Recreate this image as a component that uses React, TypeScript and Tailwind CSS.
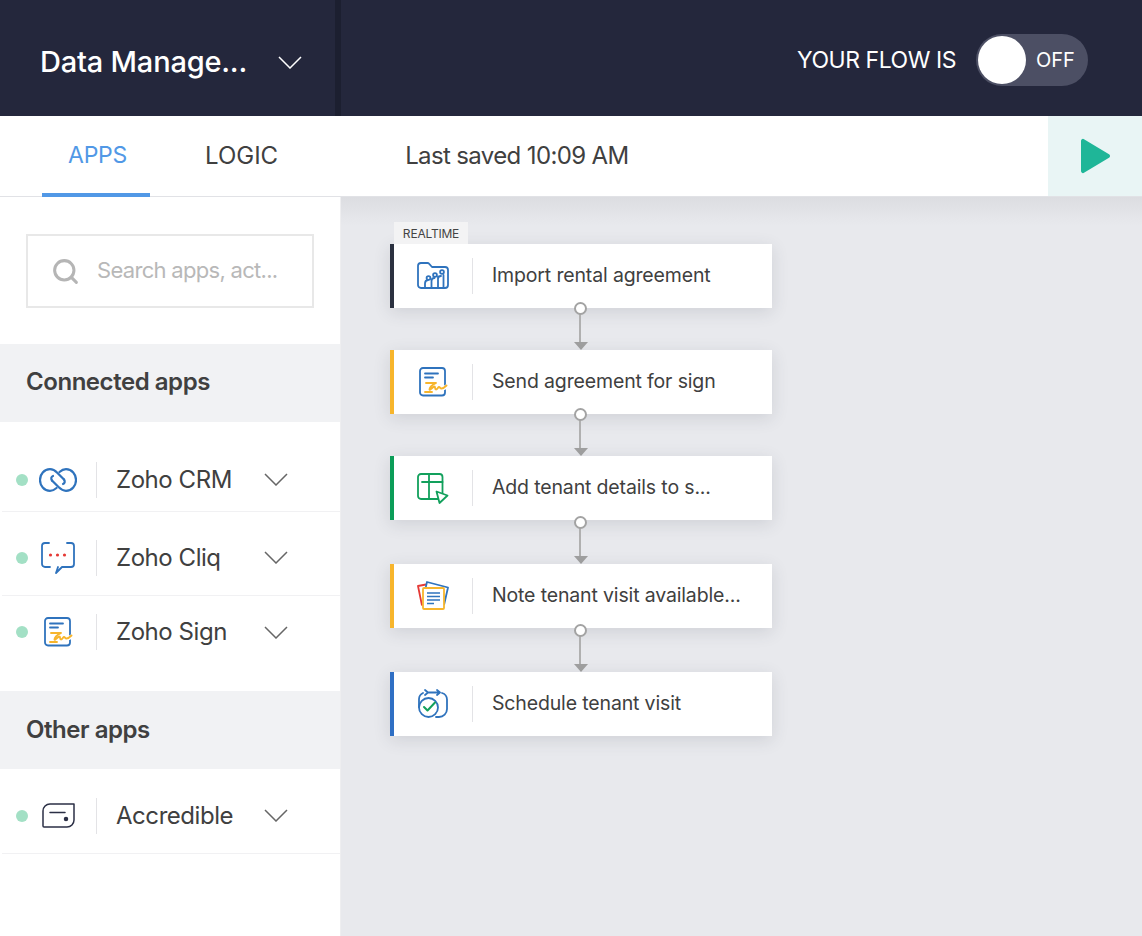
import { Search } from "lucide-react";
import type { ReactNode } from "react";

const BLUE = "#2f73bd";
const YELLOW = "#f7b52c";
const GREEN = "#12a05c";

const Chevron = ({ color }: { color: string }) => (
  <svg width="24" height="13" viewBox="0 0 24 13" fill="none" stroke={color} strokeWidth="1.500">
    <path d="M1 1l11 11L23 1" />
  </svg>
);

const FolderIcon = () => (
  <svg width="32" height="28" viewBox="0 0 32 28" fill="none" stroke={BLUE} strokeWidth="1.800" strokeLinecap="round" strokeLinejoin="round">
    <path d="M8 26H4a3 3 0 0 1-3-3V4a3 3 0 0 1 3-3h6.500a2 2 0 0 1 1.500.7L15 5h13a3 3 0 0 1 3 3v15a3 3 0 0 1-3 3H8z" />
    <path d="M8 26v-4.500a3.500 3.500 0 0 1 3-3.500M14.500 26v-8.500M14.500 19a3 3 0 0 1 3-3M21 26V14.500M21 17a3 3 0 0 1 3-3M26.500 26V13" />
    <circle cx="11.500" cy="16" r="1.900" />
    <circle cx="18" cy="13" r="1.900" />
    <circle cx="25" cy="10" r="1.900" />
  </svg>
);

const SignIcon = () => (
  <svg width="29" height="30" viewBox="0 0 29 30" fill="none" strokeLinecap="round" strokeLinejoin="round">
    <rect x="1" y="1" width="25" height="27.500" rx="3" stroke={BLUE} strokeWidth="1.800" />
    <path d="M6 6.500h13M6 10.500h8" stroke={BLUE} strokeWidth="1.800" />
    <path d="M20 22.500c1 0 4-.5 8-3.500" stroke="#fff" strokeWidth="4" />
    <path d="M7 16h10c-3 1.500-6.500 3.500-6.500 6.500 0 1.500 3.500-3 5-3 1 0 0 3 1.500 3s2-2.500 3-2.500 1 1.500 2.500 1.500 3-1 5-3" stroke={YELLOW} strokeWidth="1.900" />
    <path d="M6 25h7" stroke={YELLOW} strokeWidth="1.900" />
  </svg>
);

const SheetIcon = () => (
  <svg width="32" height="31" viewBox="0 0 32 31" fill="none" stroke={GREEN} strokeWidth="1.800" strokeLinecap="round" strokeLinejoin="round">
    <rect x="1" y="1" width="24.500" height="25" rx="3" />
    <path d="M5 9h20.500M12 1v25" />
    <path d="M19.500 18.500 30.500 22.500 22.500 30z" fill="#fff" />
  </svg>
);

const NotesIcon = () => (
  <svg width="32" height="30" viewBox="0 0 32 30" fill="none" strokeLinejoin="round">
    <path d="M5 24.500 1 5l8-1.500" stroke="#e53935" strokeWidth="1.800" />
    <path d="M27 24l4-17.500L10 1 8.800 6" stroke={BLUE} strokeWidth="1.800" />
    <rect x="6" y="7" width="21" height="21" rx="1" fill="#fff" stroke={YELLOW} strokeWidth="1.800" />
    <path d="M10 12h13M10 15.500h13M10 19h13M10 22.500h7" stroke={BLUE} strokeWidth="1.500" />
  </svg>
);

const CalendarIcon = () => (
  <svg width="30" height="30" viewBox="0 0 30 30" fill="none" stroke={BLUE} strokeWidth="1.800" strokeLinecap="round" strokeLinejoin="round">
    <circle cx="10.500" cy="18.500" r="9.500" />
    <path d="M1 18v-8a7 7 0 0 1 4-6M7 1l3 2.500L7 6M10 3.500h11M19 1l3 2.500L19 6M24 4a7 7 0 0 1 5 6.500V20a8 8 0 0 1-8 8h-3" />
    <path d="M6 18l3.500 3.500L17 13.500" stroke={GREEN} strokeWidth="2" />
  </svg>
);

const CrmIcon = () => (
  <svg width="38" height="24" viewBox="0 0 38 24" fill="none" stroke={BLUE} strokeWidth="2.200" strokeLinecap="round">
    <path d="M17.500 20C15.500 21.800 13.500 22.800 11 22.800 5 22.800 1 17.500 1 12S5 1.200 11 1.200c3 0 5 1.300 7.500 3.800L25 11.500" />
    <path d="M20.500 4C22.500 2.200 24.500 1.200 27 1.200 33 1.200 37 6.500 37 12S33 22.800 27 22.800c-3 0-5-1.300-7.500-3.800L13 12.500" />
    <path d="M13 12.500c-1.500-2-.5-4 1-4.500M25 11.500c1.500 2 .5 4-1 4.500" />
  </svg>
);

const CliqIcon = () => (
  <svg width="34" height="32" viewBox="0 0 34 32" fill="none" strokeLinecap="round" strokeLinejoin="round">
    <path d="M9 25H4a3 3 0 0 1-3-3V4a3 3 0 0 1 3-3h4M26 1h4a3 3 0 0 1 3 3v18a3 3 0 0 1-3 3H21l-6 6 2-6" stroke={BLUE} strokeWidth="1.800" />
    <circle cx="9.500" cy="13" r="1.600" fill="#e53935" />
    <circle cx="16.500" cy="13" r="1.600" fill="#e53935" />
    <circle cx="23.500" cy="13" r="1.600" fill="#e53935" />
  </svg>
);

const AccredibleIcon = () => (
  <svg width="33" height="25" viewBox="0 0 33 25" fill="none" stroke="#2b2f45" strokeWidth="1.500" strokeLinecap="round" strokeLinejoin="round">
    <path d="M8 1h24v16a7 7 0 0 1-7 7H2a1 1 0 0 1-1-1V8a7 7 0 0 1 7-7z" />
    <path d="M8 9.500h15" />
    <circle cx="24" cy="16" r="1.500" fill="#2b2f45" />
  </svg>
);

const connected = [
  { name: "Zoho CRM", icon: <CrmIcon />, h: "h-[90px] pt-[26px]" },
  { name: "Zoho Cliq", icon: <CliqIcon />, h: "h-[84px] pt-[8px]" },
  { name: "Zoho Sign", icon: <SignIcon />, h: "h-[72px] border-b-0" },
];

const steps = [
  { name: "Import rental agreement", icon: <FolderIcon />, bar: "border-l-[#2b3140]", tag: "REALTIME" },
  { name: "Send agreement for sign", icon: <SignIcon />, bar: "border-l-[#f7b52c]" },
  { name: "Add tenant details to s...", icon: <SheetIcon />, bar: "border-l-[#0b9d58]" },
  { name: "Note tenant visit available...", icon: <NotesIcon />, bar: "border-l-[#f7b52c]", tall: true },
  { name: "Schedule tenant visit", icon: <CalendarIcon />, bar: "border-l-[#2f6fc4]", tall: true },
];

const AppRow = ({ name, icon, h }: { name: string; icon: ReactNode; h: string }) => (
  <div className={`ml-[2px] flex items-center border-b border-[#f1f1f3] pl-[14px] ${h}`}>
    <span className="h-3 w-3 shrink-0 rounded-full bg-[#a3e0c5]" />
    <div className="flex w-[68px] shrink-0 justify-center pr-[8px]">{icon}</div>
    <div className="h-9 w-px shrink-0 bg-[#e3e3e6]" />
    <span className="ml-[19px] w-[148px] text-[24px] tracking-[-0.45px] text-[#404040]">{name}</span>
    <Chevron color="#666666" />
  </div>
);

const Connector = ({ tall }: { tall?: boolean }) => (
  <div className={`relative ml-[189px] w-px ${tall ? "h-[44px]" : "h-[42px]"}`}>
    <div className={`absolute left-[-5px] z-10 h-[13px] w-[13px] rounded-full border-2 border-[#a3a3a3] bg-white ${tall ? "top-[-4px]" : "top-[-6px]"}`} />
    <div className="absolute bottom-[8px] left-0 top-[6px] w-[2px] bg-[#b0b0b0]" />
    <div className="absolute bottom-0 left-[-5px] h-0 w-0 border-x-[7px] border-t-[8px] border-x-transparent border-t-[#a0a0a0]" />
  </div>
);

export default function App() {
  return (
    <div className="flex h-[936px] w-[1142px] flex-col overflow-hidden bg-white font-['Inter','Liberation_Sans',sans-serif] text-[#404040]">
      <header className="flex h-[116px] shrink-0 bg-[#24273c] text-white">
        <div className="flex w-[341px] items-center border-r-[6px] border-[#1c1f30] pl-[40px] pt-[8px]">
          <span className="w-[238px] text-[29px] font-medium tracking-[-0.2px]">Data Manage...</span>
          <Chevron color="#ffffff" />
        </div>
        <div className="flex flex-1 items-center justify-end pr-[54px] pt-[4px]">
          <span className="mr-[20px] text-[23px] tracking-[-0.45px]">YOUR FLOW IS</span>
          <div className="flex h-[52px] w-[112px] items-center rounded-full bg-[#4c4f64] pl-[2px]">
            <div className="h-[48px] w-[48px] rounded-full bg-white" />
            <span className="ml-[10px] text-[20px]">OFF</span>
          </div>
        </div>
      </header>

      <nav className="z-20 flex h-[81px] shrink-0 border-b border-[#e1e2e6] bg-white">
        <div className="flex pl-[42px]">
          <div className="-mb-px flex w-[108px] items-center justify-center border-b-[4px] border-[#5198e6] pl-[3px] pt-[1px] text-[23px] tracking-[-0.3px] text-[#5198e6]">APPS</div>
          <div className="ml-[55px] flex items-center text-[24px]">LOGIC</div>
        </div>
        <div className="ml-[127px] flex flex-1 items-center text-[24px] tracking-[-0.63px]">Last saved 10:09 AM</div>
        <div className="flex w-[94px] items-center justify-center bg-[#e9f5f5]">
          <svg width="32" height="36" viewBox="0 0 32 36"><path d="M3 3v30a1 1 0 0 0 1.500 1l25-15a1.200 1.200 0 0 0 0-2L4.500 2A1 1 0 0 0 3 3z" fill="#1fb698" stroke="#1fb698" strokeWidth="2" strokeLinejoin="round" /></svg>
        </div>
      </nav>

      <div className="flex min-h-0 flex-1">
        <aside className="flex w-[341px] shrink-0 flex-col border-r border-[#eeeef0] bg-white">
          <div className="mx-[26px] mt-[37px] flex h-[74px] w-[288px] items-center border-2 border-[#e8e8e8] pl-[23px]">
            <Search className="h-[29px] w-[29px] text-[#b5b5b5]" strokeWidth={2.500} />
            <span className="ml-[17px] pb-[2px] text-[22px] tracking-[-0.7px] text-[#b8b8b8]">Search apps, act...</span>
          </div>
          <div className="mt-[36px] flex h-[78px] items-center bg-[#f1f2f4] pb-[2px] pl-[26px] text-[24px] font-semibold tracking-[-0.45px]">Connected apps</div>
          {connected.map(row => (
            <AppRow key={row.name} {...row} />
          ))}
          <div className="mt-[23px] flex h-[78px] items-center bg-[#f1f2f4] pl-[26px] text-[24px] font-semibold tracking-[-0.45px]">Other apps</div>
          <AppRow name="Accredible" icon={<AccredibleIcon />} h="h-[85px] pt-[9px]" />
        </aside>

        <main className="flex-1 bg-[#e8e9ed] bg-gradient-to-b from-[#dcdde1] to-[#e8e9ed] bg-[length:100%_28px] bg-no-repeat pl-[49px] pt-[47px]">
          {steps.map((step, i) => (
            <div key={step.name}>
              {i > 0 && <Connector tall={step.tall} />}
              <div className={`relative flex h-[64px] w-[382px] items-center border-l-4 bg-white shadow-[0_4px_16px_rgba(60,65,80,0.14)] ${step.bar}`}>
                {step.tag && (
                  <div className="absolute left-0 top-[-22px] flex h-[22px] w-[74px] items-center justify-center bg-[#f3f3f4] pt-[1px] text-[12px] tracking-[-0.2px] text-[#444]">{step.tag}</div>
                )}
                <div className="flex w-[78px] shrink-0 justify-center">{step.icon}</div>
                <div className="h-9 w-px shrink-0 bg-[#e3e3e6]" />
                <span className="ml-[19px] text-[19.5px] tracking-[-0.15px] text-[#404040]">{step.name}</span>
              </div>
            </div>
          ))}
        </main>
      </div>
    </div>
  );
}
